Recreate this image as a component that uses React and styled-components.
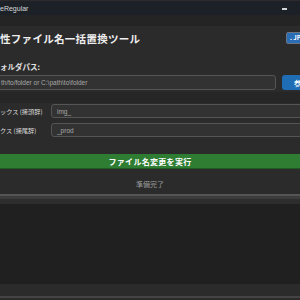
import React from 'react'
import styled, { createGlobalStyle } from 'styled-components'

const Global = createGlobalStyle`
  html, body { margin: 0; padding: 0; background: #2b2b2b; }
  body { width: 300px; height: 300px; overflow: hidden; }
  * { box-sizing: border-box; }
`

const Window = styled.div`
  width: 300px;
  height: 300px;
  display: flex;
  flex-direction: column;
  overflow: hidden;
  font-family: "Noto Sans CJK JP", "Noto Sans", sans-serif;
  background: #2b2b2b;
  color: #e6e6e6;
`

const TitleBar = styled.div`
  height: 15px;
  flex: none;
  background: #1c2128;
  border-top: 1px solid #2e2a2c;
  display: flex;
  align-items: center;
  justify-content: space-between;
  padding-right: 13px;
`

const TitleText = styled.span`
  font-family: "Liberation Sans", Arial, sans-serif;
  font-size: 7px;
  color: #d8d8d8;
`

const MinimizeGlyph = styled.span`
  width: 5px;
  height: 2px;
  background: #cfd3d8;
  margin-top: 2px;
`

const Band = styled.div`
  height: ${p => p.h}px;
  flex: none;
  background: ${p => p.bg};
`

const Header = styled.div`
  height: 24px;
  flex: none;
  display: flex;
  align-items: center;
  justify-content: space-between;
`

const Heading = styled.h1`
  margin: 0;
  font-size: 10.5px;
  font-weight: 700;
  letter-spacing: 0.3px;
  color: #eeeeee;
  white-space: nowrap;
`

const ThemeButton = styled.div`
  width: 16px;
  height: 12px;
  margin-right: -2px;
  background: #2a6db5;
  border: 1px solid #6b7280;
  border-radius: 2px;
  color: #fff;
  font-size: 6px;
  font-weight: 700;
  line-height: 10px;
  padding-left: 3px;
  white-space: nowrap;
  overflow: hidden;
`

const FieldLabel = styled.div`
  margin-top: 12px;
  height: 10px;
  flex: none;
  font-size: 7.5px;
  font-weight: 700;
  line-height: 10px;
  color: #e0e0e0;
  white-space: nowrap;
`

const PathRow = styled.div`
  margin-top: 3px;
  height: 15px;
  flex: none;
  display: flex;
  gap: 6px;
`

const Input = styled.div`
  flex: ${p => (p.grow ? 1 : 'none')};
  height: ${p => p.h || 15}px;
  margin-left: ${p => p.ml || 0}px;
  margin-right: ${p => p.mr || 0}px;
  background: #323232;
  border: 1px solid #555555;
  border-radius: 3px;
  font-family: "Liberation Sans", Arial, "Noto Sans CJK JP", sans-serif;
  font-size: 6.5px;
  color: #a8a8a8;
  display: flex;
  align-items: center;
  padding-left: ${p => p.pl || 4}px;
  white-space: nowrap;
  overflow: hidden;
`

const BlueButton = styled.div`
  width: 26px;
  margin-right: -8px;
  flex: none;
  background: #1f6db5;
  border-radius: 3px;
  color: #fff;
  font-size: 7px;
  font-weight: 700;
  display: flex;
  align-items: center;
  padding-left: 12px;
  white-space: nowrap;
  overflow: hidden;
`

const OptionRow = styled.div`
  height: 14px;
  margin-top: ${p => p.mt}px;
  flex: none;
  display: grid;
  grid-template-columns: 51px 1fr;
  align-items: center;
`

const OptionLabel = styled.span`
  font-size: 6.2px;
  color: #dcdcdc;
  white-space: nowrap;
`

const RunButton = styled.div`
  margin-top: 17px;
  height: 15px;
  flex: none;
  background: #2e7d32;
  border-bottom: 1px solid #1f5a23;
  color: #ffffff;
  font-size: 8px;
  font-weight: 700;
  letter-spacing: 0.3px;
  display: flex;
  align-items: center;
  justify-content: center;
`

const Status = styled.div`
  height: 25px;
  flex: none;
  font-size: 7px;
  color: #9a9a9a;
  display: flex;
  align-items: center;
  justify-content: center;
  padding-top: 5px;
`

const LogArea = styled.div`
  height: 80px;
  flex: none;
  background: #1f201f;
`

export default function App() {
  return (
    <>
      <Global />
      <Window>
        <TitleBar>
          <TitleText>eRegular</TitleText>
          <MinimizeGlyph />
        </TitleBar>
        <Band h={11} bg="#242424" />
        <Header>
          <Heading>性ファイル名一括置換ツール</Heading>
          <ThemeButton>. JP</ThemeButton>
        </Header>
        <FieldLabel>ォルダパス:</FieldLabel>
        <PathRow>
          <Input grow ml={-4} pl={4}>th/to/folder or C:\path\to\folder</Input>
          <BlueButton>参照</BlueButton>
        </PathRow>
        <Band h={2} bg="#2b2b2b" />
        <Band h={11} bg="#262626" />
        <OptionRow mt={1}>
          <OptionLabel>ックス (接頭辞)</OptionLabel>
          <Input h={14} pl={5} mr={-4}>img_</Input>
        </OptionRow>
        <OptionRow mt={5}>
          <OptionLabel>クス (接尾辞)</OptionLabel>
          <Input h={14} pl={5} mr={-4}>_prod</Input>
        </OptionRow>
        <RunButton>ファイル名変更を実行</RunButton>
        <Status>準備完了</Status>
        <Band h={2} bg="#555555" />
        <Band h={3} bg="#3c3c3c" />
        <Band h={5} bg="#2d2d2d" />
        <LogArea />
        <Band h={12} bg="#2b2b2b" />
        <Band h={2} bg="#444444" />
      </Window>
    </>
  )
}
